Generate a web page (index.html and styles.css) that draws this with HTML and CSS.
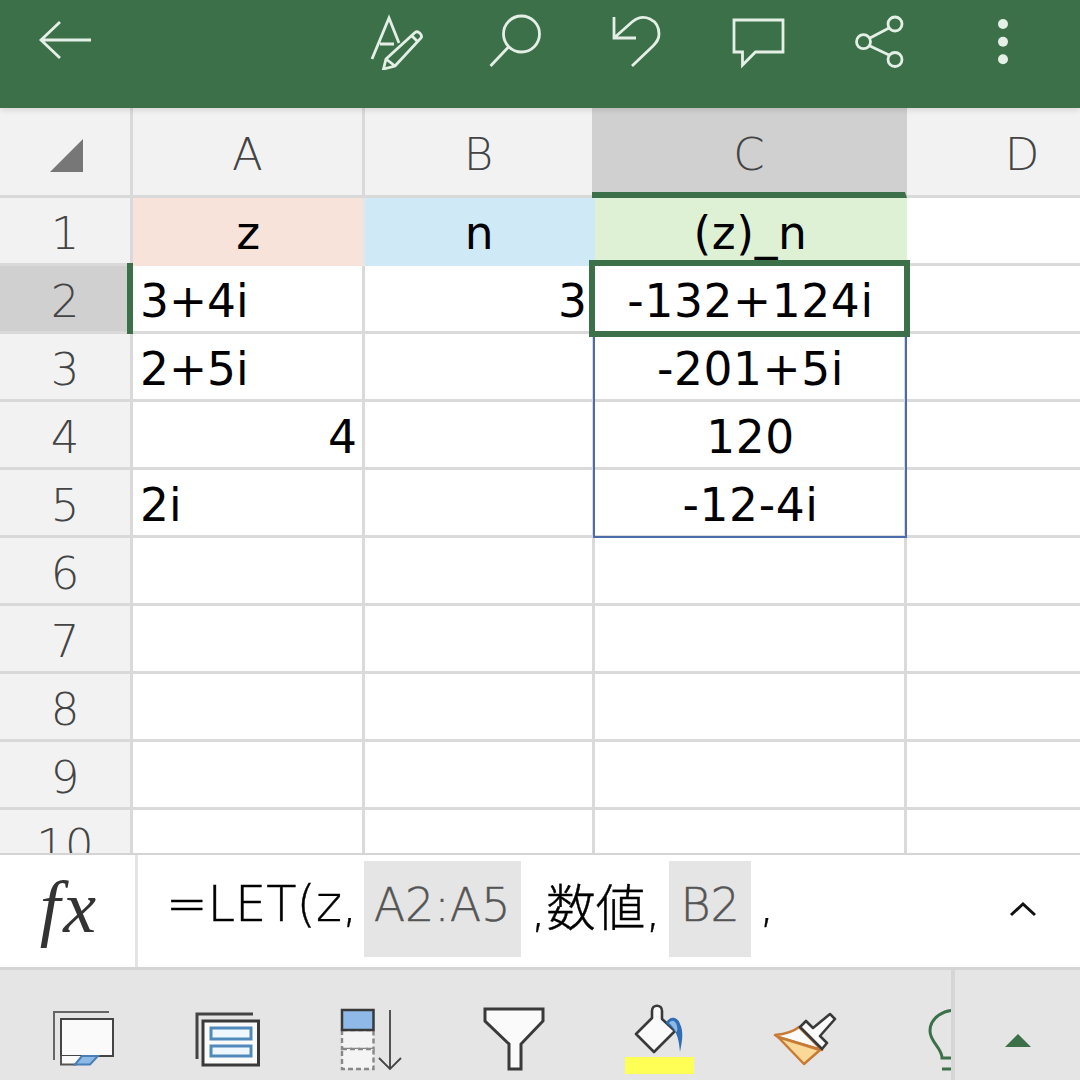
FILE: index.html
```html
<!DOCTYPE html>
<html lang="ja">
<head>
<meta charset="utf-8">
<title>Excel</title>
<link rel="stylesheet" href="styles.css">
</head>
<body>
<div class="app">
  <header class="topbar">
    <svg class="ticon" viewBox="36 10 60 60"><path d="M91 40H41M60 22L41 40L60 58"/></svg>
    <div class="topgroup">
      <svg class="ticon" viewBox="368 10 60 60"><path d="M372 59L389 18L399 43M380 44H394M383.5 69L386 59L415 32.5C418 30 423 35 421 38L395 66ZM386 59L395 66M412 36L418 42"/></svg>
      <svg class="ticon" viewBox="489 10 60 60"><circle cx="521.5" cy="34" r="18"/><path d="M508.5 47L490.5 66"/></svg>
      <svg class="ticon" viewBox="610 10 60 60"><path d="M614 17V38H636M614 38L632 22C644 12 659 20 659 34C659 40 656 43 653 46L632 66"/></svg>
      <svg class="ticon" viewBox="731 10 60 60"><path d="M734 20H783V52H755.5L742.5 65V52H734Z"/></svg>
      <svg class="ticon" viewBox="852 10 60 60"><circle cx="895" cy="24" r="7"/><circle cx="863.5" cy="41.7" r="7"/><circle cx="895" cy="59.5" r="7"/><path d="M870 38L889 28M870 46L889 55"/></svg>
      <svg class="ticon" viewBox="973 10 60 60"><circle class="dot" cx="1003" cy="24" r="5"/><circle class="dot" cx="1003" cy="41.7" r="5"/><circle class="dot" cx="1003" cy="59.3" r="5"/></svg>
    </div>
  </header>

  <main class="sheet">
    <div class="grid">
      <div class="corner"><svg class="corner-tri" viewBox="0 0 34 34"><path d="M0 33H33V0Z"/></svg></div>
      <div class="colh">A</div>
      <div class="colh">B</div>
      <div class="colh colh-sel">C</div>
      <div class="colh colh-last">D</div>

      <div class="rowh">1</div>
      <div class="cell center fill-a">z</div>
      <div class="cell center fill-b">n</div>
      <div class="cell center fill-c">(z)_n</div>
      <div class="cell last"></div>

      <div class="rowh rowh-sel">2</div>
      <div class="cell">3+4i</div>
      <div class="cell right">3</div>
      <div class="cell center">-132+124i</div>
      <div class="cell last"></div>

      <div class="rowh">3</div>
      <div class="cell">2+5i</div>
      <div class="cell"></div>
      <div class="cell center">-201+5i</div>
      <div class="cell last"></div>

      <div class="rowh">4</div>
      <div class="cell right">4</div>
      <div class="cell"></div>
      <div class="cell center">120</div>
      <div class="cell last"></div>

      <div class="rowh">5</div>
      <div class="cell">2i</div>
      <div class="cell"></div>
      <div class="cell center">-12-4i</div>
      <div class="cell last"></div>

      <div class="rowh">6</div><div class="cell"></div><div class="cell"></div><div class="cell"></div><div class="cell last"></div>
      <div class="rowh">7</div><div class="cell"></div><div class="cell"></div><div class="cell"></div><div class="cell last"></div>
      <div class="rowh">8</div><div class="cell"></div><div class="cell"></div><div class="cell"></div><div class="cell last"></div>
      <div class="rowh">9</div><div class="cell"></div><div class="cell"></div><div class="cell"></div><div class="cell last"></div>
      <div class="rowh">10</div><div class="cell"></div><div class="cell"></div><div class="cell"></div><div class="cell last"></div>
    </div>
    <div class="range"></div>
    <div class="selection"></div>
  </main>

  <section class="formula">
    <div class="fx">fx</div>
    <div class="ftext">
      <span class="ftx">=LET(z,</span>
      <span class="chip chip-a">A2:A5</span>
      <span class="ftx">,数値,</span>
      <span class="chip chip-b">B2</span>
      <span class="ftx">,</span>
      <svg class="chev" viewBox="0 0 28 16"><path d="M2 14L14 3L26 14"/></svg>
    </div>
  </section>

  <footer class="bottombar">
    <div class="tools">
      <svg class="bicon" viewBox="35 1000 100 80">
        <path class="g2" d="M54 1060V1012H109"/>
        <rect class="w2" x="61" y="1019" width="52" height="37"/>
        <path class="w1" d="M61 1056V1064.5H76L82 1056"/>
        <path class="blue1" d="M82 1056H98L90 1064.5H75Z"/>
      </svg>
      <svg class="bicon" viewBox="178 1000 100 80">
        <path class="d3" d="M197 1059V1014H253"/>
        <rect class="w3" x="203" y="1021" width="55.5" height="44"/>
        <rect class="b3" x="211" y="1028" width="40" height="11"/>
        <rect class="b3" x="211" y="1046" width="40" height="10"/>
      </svg>
      <svg class="bicon" viewBox="321 1000 100 80">
        <rect class="wd" x="342" y="1030" width="31.5" height="19"/>
        <rect class="wd" x="342" y="1049" width="31.5" height="20"/>
        <rect class="bf" x="342" y="1010" width="31.5" height="20"/>
        <path class="thin" d="M390 1010V1068M379 1058L390 1069L401 1058"/>
      </svg>
      <svg class="bicon" viewBox="464 1000 100 80">
        <path class="w3" d="M485 1009H543V1021L521 1044V1069H509V1044L485 1021Z"/>
      </svg>
      <svg class="bicon" viewBox="607 1000 100 80">
        <path class="w25" d="M636 1034L652 1018V1011C652 1004 662 1004 662 1011V1019L675 1031L654 1052Z"/>
        <path class="drop" d="M666 1023C670 1015 678 1017 680 1024C684 1032 682 1042 680 1052C679 1040 677 1032 672 1028C670 1026 668 1025 666 1023Z"/>
        <path class="dropin" d="M669 1023C672 1019 676 1021 677 1026C678 1030 677 1032 676 1032C674 1028 672 1026 669 1023Z"/>
        <rect class="yellow" x="625" y="1057" width="69" height="17"/>
      </svg>
      <svg class="bicon" viewBox="750 1000 100 80">
        <path class="br-w" d="M775 1035C785 1034 793 1032 799 1027L822 1050L778 1037Z"/>
        <path class="br-y" d="M778 1037L820 1050L804 1064Z"/>
        <path class="w25" d="M800 1027L806 1021L813 1028L830 1014L835 1019L820 1036L827 1043L822 1049Z"/>
      </svg>
      <svg class="bicon" viewBox="893 1000 100 80">
        <path class="bulb" d="M960 1011C944 1008 930 1018 930 1031C930 1042 942 1048 942 1058H965M942 1069H965"/>
      </svg>
    </div>
    <div class="collapse">
      <svg class="tri" viewBox="0 0 26 13"><path d="M13 0L26 13H0Z"/></svg>
    </div>
  </footer>
</div>
</body>
</html>
```
FILE: styles.css
```css
* { box-sizing: border-box; }
html, body { margin: 0; padding: 0; }
body { background: #fff; font-family: "DejaVu Sans", "Noto Sans CJK JP", sans-serif; }
.app { width: 1080px; height: 1080px; display: flex; flex-direction: column; overflow: hidden; }

.topbar { height: 108px; flex: none; background: #3c7049; display: flex; align-items: flex-start; padding: 10px 47px 0 36px; position: relative; z-index: 3; box-shadow: 0 2px 6px rgba(0,0,0,.12); }
.topgroup { margin-left: auto; display: flex; gap: 61px; }
.ticon { width: 60px; height: 60px; flex: none; fill: none; stroke: #e4efe6; stroke-width: 2.8; }
.ticon .dot { fill: #e4efe6; stroke: none; }

.sheet { flex: none; height: 745px; position: relative; overflow: hidden; }
.grid { display: grid; grid-template-columns: 133px 232px 230px 312px 230px; grid-template-rows: 90px; grid-auto-rows: 68px; }
.corner, .colh, .rowh { background: #f2f2f2; color: #444; font-weight: 200; font-family: "DejaVu Sans ExtraLight", "DejaVu Sans", sans-serif; display: flex; align-items: center; justify-content: center; border-bottom: 3px solid #d9d9d9; border-right: 3px solid #d9d9d9; font-size: 45px; }
.corner { align-items: flex-start; padding: 31px 0 0 0; }
.corner-tri { width: 34px; height: 34px; margin-left: 3px; fill: #777; }
.colh { padding-top: 6px; }
.colh-sel { background: #d0d0d0; border-bottom: 6px solid #3c7049; border-right: 2px solid #d0d0d0; position: relative; padding-top: 9px; padding-right: 2px; }
.colh-sel::before { content: ""; position: absolute; left: -3px; top: 0; bottom: -6px; width: 3px; background: linear-gradient(#d0d0d0 84px, #3c7049 84px); }
.colh-last { border-right: 0; }
.rowh { padding-top: 6px; }
.rowh-sel { background: #d0d0d0; position: relative; }
.rowh-sel::after { content: ""; position: absolute; right: -3px; top: -3px; bottom: -3px; width: 6px; background: #3c7049; }

.cell { background: #fff; color: #000; font-size: 45.5px; line-height: 66px; padding: 3px 5px 0 7px; border-bottom: 3px solid #dadada; border-right: 3px solid #dadada; white-space: nowrap; overflow: hidden; }
.center { text-align: center; letter-spacing: 0.6px; }
.right { text-align: right; }
.last { border-right: 0; }
.fill-a { background: #f7e3d9; border-bottom-color: #f7e3d9; border-right-color: #e6e6e6; }
.fill-b { background: #cfeaf6; border-color: #cfeaf6; }
.fill-c { background: #dff1d4; border-color: #dff1d4; }

.range { position: absolute; left: 593px; top: 226px; width: 314px; height: 204px; border: 2.5px solid #4a6ca8; }
.selection { position: absolute; left: 589px; top: 152px; width: 321px; height: 77px; border: 6px solid #3c7049; }

.formula { height: 117px; flex: none; display: flex; background: #fff; border-top: 2px solid #d4d4d4; border-bottom: 3px solid #d4d4d4; }
.fx { width: 138px; flex: none; border-right: 3px solid #e4e4e4; font-family: "Liberation Serif", serif; font-style: italic; font-size: 74px; letter-spacing: 3px; color: #333; text-align: center; line-height: 104px; padding-left: 4px; }
.ftext { flex: 1; display: flex; align-items: center; padding: 0 0 4px 28px; font-family: "DejaVu Sans ExtraLight", "DejaVu Sans", "Noto Sans CJK JP", sans-serif; font-weight: 200; font-size: 49.5px; color: #000; white-space: nowrap; -webkit-text-stroke: 0.4px #000; }
.ftx { margin-bottom: 10px; }
.chip { height: 96px; line-height: 88px; font-size: 46px; background: #e5e5e5; color: #555; -webkit-text-stroke: 0.4px #555; display: block; margin: 0 10px 0 6px; text-align: center; }
.chip-a { width: 157px; }
.chip-b { width: 82px; margin: 0 8px 0 8px; }
.chev { width: 28px; height: 16px; margin-left: auto; margin-right: 43px; fill: none; stroke: #111; stroke-width: 3; }

.bottombar { flex: none; height: 110px; background: #e5e5e5; display: flex; }
.tools { width: 951px; flex: none; overflow: hidden; display: flex; gap: 43px; padding: 30px 0 0 35px; position: relative; }
.bicon { width: 100px; height: 80px; flex: none; fill: none; }
.collapse { flex: 1; border-left: 4px solid #d6d6d6; display: flex; justify-content: center; padding: 64px 0 0 0; }
.tri { width: 26px; height: 13px; fill: #3c7049; }

.g2 { stroke: #666; stroke-width: 2; }
.w2 { fill: #fafafa; stroke: #444; stroke-width: 2; }
.w1 { fill: #fafafa; stroke: #555; stroke-width: 2; }
.blue1 { fill: #8db9e6; stroke: #4a7fb5; stroke-width: 2; }
.d3 { stroke: #444; stroke-width: 3; }
.w3 { fill: #fafafa; stroke: #3a3a3a; stroke-width: 3; }
.b3 { fill: #eef7ff; stroke: #4f8abb; stroke-width: 3; }
.wd { fill: #f4f4f4; stroke: #888; stroke-width: 2.4; stroke-dasharray: 5 3; }
.bf { fill: #8fb9e8; stroke: #3a3a3a; stroke-width: 2.5; }
.thin { stroke: #444; stroke-width: 1.8; }
.w25 { fill: #fafafa; stroke: #3a3a3a; stroke-width: 2.6; stroke-linejoin: round; }
.drop { fill: #2f6db5; }
.dropin { fill: #8db9e6; }
.yellow { fill: #ffff55; }
.br-w { fill: #fafafa; stroke: #c87b35; stroke-width: 2.5; stroke-linejoin: round; }
.br-y { fill: #f9d898; stroke: #c87b35; stroke-width: 2.5; stroke-linejoin: round; }
.bulb { stroke: #3c7049; stroke-width: 3; }
```
